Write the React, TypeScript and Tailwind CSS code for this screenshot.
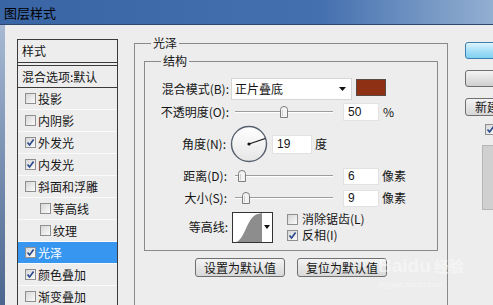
import React from "react";

const Check = ({ checked }: { checked?: boolean }) => (
  <span className="inline-flex h-[11px] w-[11px] shrink-0 items-center justify-center border border-[#8f8f8f] bg-gradient-to-br from-[#d6d6d6] to-[#fbfbfb]">
    {checked && (
      <svg width="9" height="9" viewBox="0 0 9 9">
        <path d="M1.5 4.5 L3.6 7 L7.6 1.6" fill="none" stroke="#2a4b8d" strokeWidth="1.7" />
      </svg>
    )}
  </span>
);

const Slider = ({ pos }: { pos: number }) => (
  <div className="relative h-[14px] w-[98px] shrink-0">
    <div className="absolute left-0 right-0 top-[6px] h-[2px] border-t border-[#9d9d9d] bg-white" />
    <svg className="absolute top-[1px]" style={{ left: pos }} width="8" height="12" viewBox="0 0 8 12">
      <path d="M0.5 3.5 Q0.5 0.5 4 0.5 Q7.5 0.5 7.5 3.5 L7.5 11.5 L0.5 11.5 Z" fill="#f3f3f3" stroke="#7d7d7d" />
      <line x1="2.5" y1="4" x2="2.5" y2="10" stroke="#d0d0d0" />
    </svg>
  </div>
);

const Field = ({ v, w, h }: { v: string; w: string; h: string }) => (
  <div className={`${w} ${h} flex shrink-0 items-center bg-white pl-[4px] text-[12px] font-['Liberation_Sans',sans-serif] border border-[#e2e2e2]`}>{v}</div>
);

const rows: { t: string; c?: boolean; indent?: boolean; sel?: boolean }[] = [
  { t: "投影" },
  { t: "内阴影" },
  { t: "外发光", c: true },
  { t: "内发光", c: true },
  { t: "斜面和浮雕" },
  { t: "等高线", indent: true },
  { t: "纹理", indent: true },
  { t: "光泽", c: true, sel: true },
  { t: "颜色叠加", c: true },
  { t: "渐变叠加" },
];

export default function App() {
  return (
    <div className="relative flex h-[305px] w-[493px] flex-col overflow-hidden bg-[#ededed] font-['Noto_Sans_CJK_SC',sans-serif] text-[12px] text-[#151515]">
      <div className="h-[25px] shrink-0 border-b border-[#2c4670] bg-[linear-gradient(to_right,#3a65a5_0%,#4470af_65%,#7c9dc7_90%,#93afd1_100%)] pl-[4px] text-[13px] leading-[25px] text-black">
        图层样式
      </div>
      <div className="flex min-h-0 flex-1">
        <div className="w-[5px] shrink-0 bg-gradient-to-b from-[#a7b9d3] to-[#4b668f]" />

        {/* Left style list */}
        <div className="ml-[12px] mt-[14px] w-[101px] shrink-0 self-start border-x border-[#3a3a3a]">
          <div className="flex h-[24px] items-center border-y border-[#3a3a3a] pl-[4px]">样式</div>
          <div className="h-[2px]" />
          <div className="flex h-[23px] items-center border-y border-[#3a3a3a] pl-[4px]">混合选项:默认</div>
          {rows.map((r) => (
            <div
              key={r.t}
              className={`flex h-[22px] items-center gap-[2px] border-b border-[#fafafa] ${r.indent ? "pl-[22px]" : "pl-[7px]"} ${r.sel ? "bg-[#3797f0] text-white" : ""}`}
            >
              <Check checked={r.c} />
              <span>{r.t}</span>
            </div>
          ))}
        </div>

        {/* Main group */}
        <fieldset className="ml-[16px] mt-[10px] h-[300px] w-[314px] shrink-0 self-start border border-[#8a8a8a]">
          <legend className="ml-[16px] px-[2px] text-[12px] leading-[16px]">光泽</legend>
          <fieldset className="ml-[9px] mt-[2px] w-[294px] border border-[#8a8a8a] pb-[7px]">
            <legend className="ml-[16px] px-[2px] text-[12px] leading-[16px]">结构</legend>

            <div className="mt-[9px] flex h-[22px] items-center">
              <div className="w-[84px] shrink-0 text-right">混合模式(B):</div>
              <div className="ml-[2px] flex h-[22px] w-[121px] items-center justify-between border border-[#d6d6d6] bg-white pl-[3px] pr-[5px]">
                <span>正片叠底</span>
                <svg width="7" height="4" viewBox="0 0 7 4"><path d="M0 0 H7 L3.5 4 Z" fill="#111" /></svg>
              </div>
              <div className="mb-[4px] ml-[4px] h-[17px] w-[30px] border border-[#5a4a44] bg-[#8e3013]" />
            </div>

            <div className="mt-[1px] flex h-[22px] items-center">
              <div className="w-[84px] shrink-0 text-right">不透明度(O):</div>
              <div className="ml-[6px]"><Slider pos={45} /></div>
              <div className="ml-[10px]"><Field v="50" w="w-[36px]" h="h-[18px]" /></div>
              <span className="ml-[4px]">%</span>
            </div>

            <div className="mt-[2px] flex h-[38px] items-center">
              <div className="w-[84px] shrink-0 pr-[3px] text-right">角度(N):</div>
              <svg className="ml-[1px] shrink-0" width="38" height="38" viewBox="0 0 38 38">
                <defs>
                  <linearGradient id="dg" x1="0" y1="0" x2="0" y2="1">
                    <stop offset="0" stopColor="#ffffff" />
                    <stop offset="1" stopColor="#e6e6e6" />
                  </linearGradient>
                </defs>
                <circle cx="19" cy="19" r="17.5" fill="url(#dg)" stroke="#56606e" strokeWidth="1.4" />
                <line x1="19" y1="19" x2="35.2" y2="13.5" stroke="#111" strokeWidth="1.1" />
                <circle cx="19" cy="19" r="1.6" fill="#111" />
              </svg>
              <div className="ml-[4px]"><Field v="19" w="w-[40px]" h="h-[19px]" /></div>
              <span className="ml-[3px]">度</span>
            </div>

            <div className="mt-[2px] flex h-[22px] items-center">
              <div className="w-[84px] shrink-0 pr-[2px] text-right">距离(D):</div>
              <div className="ml-[6px]"><Slider pos={3} /></div>
              <div className="ml-[10px]"><Field v="6" w="w-[36px]" h="h-[17px]" /></div>
              <span className="ml-[3px]">像素</span>
            </div>

            <div className="flex h-[22px] items-center">
              <div className="w-[84px] shrink-0 pr-[2px] text-right">大小(S):</div>
              <div className="ml-[6px]"><Slider pos={7} /></div>
              <div className="ml-[10px]"><Field v="9" w="w-[36px]" h="h-[17px]" /></div>
              <span className="ml-[3px]">像素</span>
            </div>

            <div className="mt-[2px] flex h-[32px] items-center">
              <div className="w-[84px] shrink-0 pr-[1px] text-right">等高线:</div>
              <div className="ml-[3px] flex h-[31px] w-[41px] shrink-0 border border-[#333]">
                <svg width="29" height="29" viewBox="0 0 29 29" className="shrink-0 bg-white">
                  <path d="M3 29 C 12 27, 14 3, 25 1 L 29 0 L 29 29 Z" fill="#8d8d8d" />
                </svg>
                <div className="flex flex-1 items-center justify-center bg-white">
                  <svg width="6" height="4" viewBox="0 0 6 4"><path d="M0 0 H6 L3 4 Z" fill="#111" /></svg>
                </div>
              </div>
              <div className="ml-[14px] flex flex-col gap-[2px]">
                <div className="flex h-[14px] items-center gap-[4px]"><Check /><span>消除锯齿(L)</span></div>
                <div className="flex h-[14px] items-center gap-[4px]"><Check checked /><span>反相(I)</span></div>
              </div>
            </div>
          </fieldset>

          <div className="mt-[7px] flex justify-center gap-[12px]">
            <div className="flex h-[19px] w-[90px] items-center justify-center rounded-[3px] border border-[#707070] bg-gradient-to-b from-[#f4f4f4] to-[#d8d8d8]">设置为默认值</div>
            <div className="flex h-[19px] w-[90px] items-center justify-center rounded-[3px] border border-[#707070] bg-gradient-to-b from-[#f4f4f4] to-[#d8d8d8]">复位为默认值</div>
          </div>
        </fieldset>

        {/* Right column */}
        <div className="ml-[17px] mt-[17px] flex w-[100px] shrink-0 flex-col self-start">
          <div className="h-[17px] w-[80px] rounded-[3px] border border-[#3c7fb1] bg-gradient-to-b from-[#dff4fd] via-[#a8e0f8] to-[#7fd0f1]" />
          <div className="mt-[11px] h-[17px] w-[80px] rounded-[3px] border border-[#707070] bg-gradient-to-b from-[#f4f4f4] to-[#cfcfcf]" />
          <div className="mt-[11px] flex h-[18px] w-[95px] items-center whitespace-nowrap rounded-[3px] border border-[#707070] bg-gradient-to-b from-[#f4f4f4] to-[#d6d6d6] pl-[9px]">新建样式(W)...</div>
          <div className="ml-[20px] mt-[7px] flex h-[12px] items-center gap-[4px] whitespace-nowrap"><Check checked /><span>预览(V)</span></div>
          <div className="ml-[17px] mt-[10px] h-[65px] w-[60px] border border-[#b5b5b5] bg-[#d0d0d0]" />
        </div>
      </div>

      {/* watermark */}
      <div className="pointer-events-none absolute left-[378px] top-[255px] flex flex-col items-start text-white/45">
        <div className="flex items-end font-['Liberation_Sans',sans-serif] text-[19px] font-bold leading-[22px]">
          <span>Bai</span>
          <span>du</span>
          <span className="ml-[3px] font-['Noto_Sans_CJK_SC',sans-serif] text-[15px]">经验</span>
        </div>
        <div className="mt-[4px] font-['Liberation_Sans',sans-serif] text-[8px] leading-[8px]">jingyan.baidu.com</div>
      </div>
    </div>
  );
}
